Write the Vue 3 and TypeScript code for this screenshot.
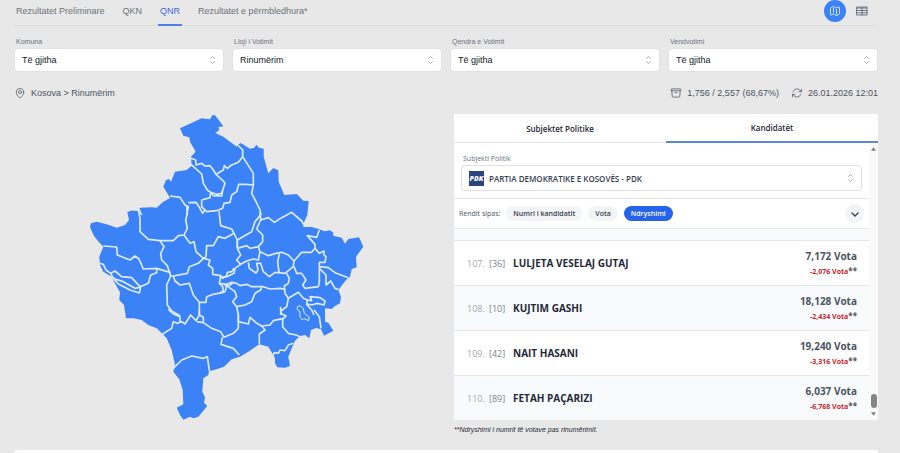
<script setup lang="ts">
import { ref } from 'vue'

interface Filter {
  id: string
  label: string
  value: string
}

interface Candidate {
  rank: number
  code: number
  name: string
  votes: string
  change: string
}

const tabs = ['Rezultatet Preliminare', 'QKN', 'QNR', 'Rezultatet e përmbledhura*']
const activeTab = ref('QNR')

const filters: Filter[] = [
  { id: 'komuna', label: 'Komuna', value: 'Të gjitha' },
  { id: 'lloji', label: 'Lloji i Votimit', value: 'Rinumërim' },
  { id: 'qendra', label: 'Qendra e Votimit', value: 'Të gjitha' },
  { id: 'vendvotimi', label: 'Vendvotimi', value: 'Të gjitha' },
]

const sorts = ['Numri i kandidatit', 'Vota', 'Ndryshimi']
const activeSort = ref('Ndryshimi')

const candidates: Candidate[] = [
  { rank: 107, code: 36, name: 'LULJETA VESELAJ GUTAJ', votes: '7,172', change: '-2,076' },
  { rank: 108, code: 10, name: 'KUJTIM GASHI', votes: '18,128', change: '-2,434' },
  { rank: 109, code: 42, name: 'NAIT HASANI', votes: '19,240', change: '-3,316' },
  { rank: 110, code: 89, name: 'FETAH PAÇARIZI', votes: '6,037', change: '-6,768' },
]
</script>

<template>
  <main class="page">
    <header class="topbar">
      <nav class="tabs">
        <a
          v-for="tab in tabs"
          :key="tab"
          href="#"
          class="tab"
          :class="{ active: tab === activeTab }"
          @click.prevent="activeTab = tab"
        >{{ tab }}</a>
      </nav>
      <div class="views">
        <button type="button" class="view on" aria-label="Harta">
          <svg viewBox="0 0 24 24" class="line"><path d="M9 6.75V15m6-6v8.25m.5 3.5 4.9-2.45c.38-.19.6-.58.6-1V4.8c0-.84-.88-1.38-1.63-1l-3.87 1.93c-.32.16-.69.16-1 0L9.5 3.25a1.1 1.1 0 0 0-1 0L3.6 5.7c-.38.19-.6.58-.6 1v12.5c0 .84.88 1.38 1.63 1l3.87-1.93c.32-.16.69-.16 1 0l5 2.5c.32.16.69.16 1 0Z" /></svg>
        </button>
        <button type="button" class="view" aria-label="Tabela">
          <svg viewBox="0 0 24 24" class="line"><path d="M2 4h20v16H2zM2 6h20M2 11h20M2 15.500h20M12 6v14" /></svg>
        </button>
      </div>
    </header>

    <form class="filters">
      <div v-for="f in filters" :key="f.id" class="field">
        <label :for="f.id">{{ f.label }}</label>
        <div class="select-box">
          <select :id="f.id"><option>{{ f.value }}</option></select>
          <svg viewBox="0 0 10 14" class="arrows"><path d="M2 5l3-3 3 3M2 9l3 3 3-3" /></svg>
        </div>
      </div>
    </form>

    <div class="status">
      <div class="crumb">
        <svg viewBox="0 0 24 24" class="line"><path d="M15 10.5a3 3 0 1 1-6 0 3 3 0 0 1 6 0Z" /><path d="M19.5 10.5c0 7.14-7.5 11.25-7.5 11.25S4.500 17.640 4.500 10.500a7.500 7.500 0 1 1 15 0Z" /></svg>
        <span>Kosova &gt; Rinumërim</span>
      </div>
      <div class="stats">
        <div class="stat">
          <svg viewBox="0 0 24 24" class="line"><path d="M20.250 7.500l-.6 10.600a2.250 2.250 0 0 1-2.250 2.150H6.600a2.250 2.250 0 0 1-2.250-2.150L3.750 7.500M10 11.250h4M3.400 7.500h17.200c.6 0 1.100-.5 1.100-1.100V4.900c0-.6-.5-1.100-1.100-1.100H3.400c-.6 0-1.100.5-1.100 1.100v1.500c0 .6.5 1.100 1.100 1.100Z" /></svg>
          <span>1,756 / 2,557 (68,67%)</span>
        </div>
        <div class="stat">
          <svg viewBox="0 0 24 24" class="line"><path d="M16 9.350h5V4.360M2.990 19.640v-5h5M3 14.650l3.200 3.200a8.250 8.250 0 0 0 13.800-3.700M4.030 9.860a8.250 8.250 0 0 1 13.800-3.700L21 9.350" /></svg>
          <span>26.01.2026 12:01</span>
        </div>
      </div>
    </div>

    <div class="content">
      <section class="map-area">
        <svg class="map" viewBox="87 114 278 308" role="img" aria-label="Kosova">
          <path
            class="land"
            d="M180 128.300L201.700 118.300L210 119.300L212.300 115.300L215 115.300L219.300 120.700L223.300 126.300L218.300 127.300L219.300 130L215.300 133L223.300 136.700L236.700 146.700L237.700 145L240.700 143L250 148.700L254.300 147.700L256.300 144.700L259 147.700L263.700 148.700L263.700 156.700L268.300 173.300L273.300 168L278.300 170.300L278.700 181.700L284.300 195L296.700 194L303.300 200.700L308.700 201L307.300 215L304 222.300L303.300 227L311.700 227L318.300 229L325 231.300L330 230.300L333.300 232.700L333.300 235.700L341.700 237.700L345 243.700L348.300 239L359 237.300L363.300 246.700L356 256.700L356.700 267.300L351.700 269L350 276.700L346 280L338.300 290L341 296.700L340 303.300L335 306L331.700 309L325 308.300L325 321.700L328.300 322.700L333.300 330.700L324 335.700L321 329.300L316 328L311 330L309.300 338.300L305 335L300 336L295 340.700L291.700 348.300L288.300 356.700L290 366L285 367.700L277.300 367.300L275 363.300L275 358L273.300 355L268.300 346.700L259.300 344.300L248.300 351.700L240 356.700L231.700 359.300L224 366.700L213.300 370.300L209 370.700L208.300 375L203.300 378.300L202.300 391.700L205 397.300L204 402.700L207.300 406L198.300 416.700L193.300 418.300L190 416.700L183.300 419.700L180 415L176.700 407.700L183.300 404.300L182.700 390L179.300 379.300L173.300 371.700L175 365L171.700 350L166.700 338.300L162.700 334L156.700 328.300L148.300 325L141.700 320L133.300 318.300L126 318.300L124 305L119.300 300L120 292.300L115 283.300L111.700 276.700L103.300 271.700L100 265L99.300 256.700L103.300 246.700L98 241L94 236L91 229.500L90 226.500L91 223.300L96.700 221.700L106.700 224.300L116.700 227.700L125 225L129 220L127.300 212.300L131 210.500L138.300 211L140 207.700L151.700 207.300L156.700 207.700L163 202L170 198L168.300 195L163.300 186.700L166 180L169 179L171 181.700L175 171.700L186.700 170L191.700 165.700L191 156.700L195.700 151.700L190 141.700L189.300 137.300L183.300 135.700Z"
          />
          <g class="borders" transform="translate(90 105) scale(0.33333)">
            <path d="M303 160L317 165L318 180L335 175L345 183L360 182L370 195L378 208L400 195L403 182L412 190L425 180L445 172L458 155" />
            <path d="M303 178L335 207L340 235L352 255L362 262L380 268L395 265L405 235L400 228L378 208" />
            <path d="M362 262L370 272L395 273L398 258M362 262L360 278L335 285L335 305L350 320L380 317L398 310L402 295L420 292L425 270L440 260L446 238L470 238L490 240" />
            <path d="M240 273L270 277L285 300L295 305L290 330M295 293L318 292L330 310L338 325L345 313M145 310L155 330" />
          </g>
          <g class="borders" transform="translate(220 105) scale(0.33333)">
            <path d="M53 120L68 135L68 155M68 155L100 205L100 240L95 265L108 290L120 315L122 330" />
          </g>
          <g class="borders" transform="translate(90 205) scale(0.33333)">
            <path d="M145 15L150 40L150 80L175 103L210 107L250 107L265 92L282 90L292 70L287 45L292 25L290 0" />
            <path d="M387 19L392 62L425 72L432 85L442 105L442 130" />
            <path d="M432 85L405 100L385 95L370 122L350 122L348 155L340 160L318 140L312 110L300 115L282 90" />
            <path d="M210 107L222 125L212 145L215 165L232 182L242 213M340 160L325 175L298 185L292 205L250 213L242 213" />
            <path d="M40 123L80 126L82 150L120 165L135 153L147 162L160 192L200 190L242 203" />
            <path d="M30 175L40 178L48 195L62 205L75 198L95 215L125 218L150 245L175 235L182 210L200 203L200 190" />
            <path d="M62 205L68 217L85 237L120 255L148 264L152 246L135 250L100 230L75 222L68 217" />
            <path d="M242 213L230 240L232 300L245 318L270 332" />
            <path d="M250 213L255 228L270 240L298 235L310 270L328 292L328 330" />
            <path d="M328 292L348 292L350 275L370 268L400 262L398 245L388 235L392 212L368 208L368 190L355 180L360 165L340 160" />
            <path d="M392 212L398 220L410 212L412 202L425 200L432 190M400 235L410 243L420 240L430 232" />
          </g>
          <g class="borders" transform="translate(220 205) scale(0.33333)">
            <path d="M122 22L118 35L105 50L95 80L52 105L52 130" />
            <path d="M122 25L122 45L145 38L163 52L185 38L215 22L245 48L252 60" />
            <path d="M122 45L110 72L128 90L128 110L115 125L120 140L145 152L168 145L185 142L205 150L222 168L245 142L275 142L285 130L285 118L262 92L290 97L298 75" />
            <path d="M52 130L80 122L90 130L115 125M52 130L62 150L50 165L62 178L80 168L100 162L115 165L120 140" />
            <path d="M85 172L88 190L108 204L114 195L110 175L122 175L130 200L148 215L165 202L195 205L220 185L222 168M178 147L173 170L177 203" />
            <path d="M62 178L45 190L42 205L20 215L0 218" />
            <path d="M222 185L230 205L245 205L258 225L248 240L255 250L295 245L298 230L298 172L315 172L318 155L312 150L312 138L298 145L285 130" />
            <path d="M298 185L325 188L345 203L385 218M298 190L318 210L318 240L332 228L345 250L355 253" />
            <path d="M200 205L208 220L205 235L193 243L195 265L205 280L235 262L250 280L262 285L260 298L275 315L282 330" />
            <path d="M262 285L275 287L270 275L300 278L315 288L312 300L292 295L275 300L262 297" />
            <path d="M0 235L20 238L35 232L50 235L60 242L80 238L95 245L130 245L150 252L180 250L195 253" />
            <path d="M20 242L45 260L50 275L38 290L50 305L75 300L95 290L105 265L122 255L125 245M50 305L55 330M205 280L200 305L183 318L182 330" />
            <path d="M20 242L15 260L0 262" />
            <path class="thin" d="M232 305L240 302L250 310L252 323L268 338L265 347L252 340L247 345L240 335L240 320L232 315Z" />
          </g>
          <g class="borders" transform="translate(90 310) scale(0.33333)">
            <path d="M218 72L245 55L250 35L262 40L275 35L285 42L302 15L318 32L328 15L328 0M235 -2L250 12L270 20L270 35" />
            <path d="M328 15L340 22L340 38L320 35M340 38L365 55L392 65L402 82L430 70L445 55L445 18M397 82L393 103L430 115L448 135" />
            <path d="M250 175L275 150L305 138L340 145L352 140L358 182" />
          </g>
          <g class="borders" transform="translate(220 310) scale(0.33333)">
            <path d="M55 10L55 35L85 42L90 22L108 38L125 48L150 45L160 32L190 25L198 18L182 10L182 -10" />
            <path d="M125 48L135 60L118 72L118 103M188 25L188 50L205 70L228 75L240 80" />
            <path d="M160 135L163 128L175 130L180 120L195 122L205 105L220 100M282 0L298 20L303 55" />
          </g>
        </svg>
      </section>

      <section class="results">
        <div class="panel">
          <div class="panel-tabs">
            <button type="button" class="panel-tab">Subjektet Politike</button>
            <button type="button" class="panel-tab current">Kandidatët</button>
          </div>
          <div class="panel-body">
            <div class="scroll-content">
              <div class="party">
                <label for="subjekti">Subjekti Politik</label>
                <div class="select-box party-box">
                  <span class="party-logo">PDK</span>
                  <select id="subjekti"><option>PARTIA DEMOKRATIKE E KOSOVËS - PDK</option></select>
                  <svg viewBox="0 0 10 14" class="arrows"><path d="M2 5l3-3 3 3M2 9l3 3 3-3" /></svg>
                </div>
              </div>
              <div class="sorting">
                <span>Rendit sipas:</span>
                <button
                  v-for="s in sorts"
                  :key="s"
                  type="button"
                  class="pill"
                  :class="{ chosen: s === activeSort }"
                  @click="activeSort = s"
                >{{ s }}</button>
                <button type="button" class="direction" aria-label="Renditja">
                  <svg viewBox="0 0 12 12"><path d="M2.500 4.500L6 8l3.500-3.500" /></svg>
                </button>
              </div>
              <ul class="list">
                <li class="previous"></li>
                <li v-for="c in candidates" :key="c.rank" class="row">
                  <span class="rank">{{ c.rank }}.</span>
                  <span class="code">[{{ c.code }}]</span>
                  <span class="name">{{ c.name }}</span>
                  <span class="votes">
                    <strong>{{ c.votes }} Vota</strong>
                    <small><em>{{ c.change }} Vota</em>**</small>
                  </span>
                </li>
              </ul>
            </div>
            <div class="scrollbar" aria-hidden="true">
              <svg viewBox="0 0 6 4"><path d="M3 0l3 4H0z" /></svg>
              <span class="thumb"></span>
              <svg viewBox="0 0 6 4"><path d="M3 4l3-4H0z" /></svg>
            </div>
          </div>
        </div>
        <p class="note">**Ndryshimi i numrit të votave pas rinumërimit.</p>
      </section>
    </div>

    <section class="next-card"></section>
  </main>
</template>

<style>
body {
  background: #e8e8e8;
}
</style>

<style scoped>
* {
  box-sizing: border-box;
}

.page {
  display: flex;
  flex-direction: column;
  min-height: 100vh;
  padding: 0 22px 0 14px;
  font-family: "Liberation Sans", Arial, sans-serif;
  font-size: 9px;
  color: #4b5563;
}

button,
select {
  font: inherit;
  border: 0;
  margin: 0;
}

.line {
  width: 12px;
  height: 12px;
  fill: none;
  stroke: currentColor;
  stroke-width: 1.5;
  stroke-linecap: round;
  stroke-linejoin: round;
}

.topbar {
  display: flex;
  justify-content: space-between;
  height: 26px;
  border-bottom: 1px solid #dcdddf;
}

.tabs {
  display: flex;
  gap: 14px;
}

.tab {
  height: 26px;
  padding: 0 2px;
  line-height: 23px;
  color: #6b7280;
  text-decoration: none;
  border-bottom: 2px solid transparent;
}

.tab.active {
  color: #3b68d8;
  border-color: #4f7fe8;
}

.views {
  display: flex;
  gap: 5px;
  padding-right: 5px;
}

.view {
  display: grid;
  place-items: center;
  width: 22px;
  height: 22px;
  padding: 0;
  border-radius: 50%;
  background: #e5e7eb;
  color: #4b5563;
}

.view.on {
  background: #3b82f6;
  color: #fff;
}

.filters {
  display: grid;
  grid-template-columns: repeat(4, 1fr);
  gap: 8px;
  padding-top: 11px;
}

.field label,
.party label {
  display: block;
  padding-left: 2px;
  font-size: 7px;
  line-height: 10px;
  color: #6b7280;
}

.select-box {
  position: relative;
  display: flex;
  align-items: center;
  height: 24px;
  margin-top: 1px;
  background: #fff;
  border: 1px solid #dfe1e4;
  border-radius: 4px;
}

.select-box select {
  flex: 1;
  min-width: 0;
  height: 100%;
  padding: 0 20px 0 7px;
  background: transparent;
  color: #111827;
  appearance: none;
}

.arrows {
  position: absolute;
  right: 7px;
  width: 7px;
  height: 10px;
  fill: none;
  stroke: #9ca3af;
  stroke-width: 1.2;
  pointer-events: none;
}

.status {
  display: flex;
  justify-content: space-between;
  height: 42px;
  padding-bottom: 1px;
}

.crumb,
.stats,
.stat {
  display: flex;
  align-items: center;
}

.crumb,
.stat {
  gap: 5px;
}

.stats {
  gap: 12px;
}

.content {
  display: grid;
  grid-template-columns: 1fr 1fr;
  gap: 16px;
}

.map-area {
  display: flex;
  justify-content: center;
  align-items: flex-start;
}

.map {
  width: 278px;
  max-width: 100%;
}

.land {
  fill: #3b82f6;
}

.borders {
  fill: none;
  stroke: #dbeafe;
  stroke-width: 5;
  stroke-linejoin: round;
}

.thin {
  stroke-width: 3;
}

.results {
  font-family: "Open Sans", "Noto Sans", sans-serif;
}

.panel {
  background: #fff;
}

.panel-tabs {
  display: grid;
  grid-template-columns: 1fr 1fr;
}

.panel-tab {
  height: 29px;
  padding: 0;
  background: none;
  font-size: 8px;
  font-weight: 600;
  color: #1f2937;
  border-bottom: 1px solid #e5e7eb;
}

.panel-tab.current {
  border-bottom: 2px solid #5b86dc;
}

.panel-body {
  display: flex;
}

.scroll-content {
  flex: 1;
  min-width: 0;
}

.party {
  padding: 11px 7px 7px;
  border-bottom: 1px solid #e5e7eb;
}

.party-box {
  height: 26px;
  padding-left: 7px;
}

.party-box select {
  font-size: 8px;
  font-weight: 600;
  color: #374151;
  padding-left: 5px;
}

.party-logo {
  width: 15px;
  height: 15px;
  background: #2b4580;
  color: #fff;
  font-size: 7px;
  font-style: italic;
  font-weight: 800;
  line-height: 15px;
  text-align: center;
}

.sorting {
  display: flex;
  align-items: center;
  gap: 6px;
  height: 29px;
  padding: 0 5px;
  font-size: 7px;
}

.pill {
  height: 15px;
  padding: 0 7px;
  border-radius: 8px;
  background: #f3f4f6;
  color: #374151;
  font-weight: 600;
}

.pill.chosen {
  background: #2563eb;
  color: #fff;
}

.direction {
  display: grid;
  place-items: center;
  width: 19px;
  height: 19px;
  margin-left: auto;
  padding: 0;
  border-radius: 50%;
  background: #f3f4f6;
}

.direction svg {
  width: 12px;
  height: 12px;
  fill: none;
  stroke: #374151;
  stroke-width: 1.3;
}

.list {
  margin: 0;
  padding: 0;
  list-style: none;
  border-top: 1px solid #e5e7eb;
}

.previous {
  height: 11px;
  background: #f8fafc;
}

.row {
  display: flex;
  align-items: center;
  height: 45px;
  padding: 0 12px 0 13px;
  border-top: 1px solid #e5e7eb;
}

.row:nth-child(odd) {
  background: #f8fafc;
}

.rank {
  width: 22px;
  color: #a3a8b0;
}

.code {
  width: 24px;
  color: #7b828d;
}

.name {
  flex: 1;
  font-size: 10px;
  font-weight: 700;
  color: #1f2937;
}

.votes {
  display: grid;
  text-align: right;
}

.votes strong {
  font-size: 10px;
  line-height: 16px;
  color: #4b5563;
}

.votes small {
  font-size: 8px;
  font-weight: 700;
  line-height: 13px;
}

.votes em {
  font-size: 7px;
  font-style: normal;
  color: #c9252d;
}

.scrollbar {
  display: flex;
  flex-direction: column;
  align-items: center;
  width: 9px;
  padding: 4px 0;
  background: #fafafa;
}

.scrollbar svg {
  width: 5px;
  height: 4px;
  fill: #7d7d7d;
}

.thumb {
  width: 6px;
  height: 14px;
  margin: auto 0 4px;
  border-radius: 3px;
  background: #858585;
}

.note {
  margin: 0;
  padding-top: 4px;
  font-family: "Liberation Sans", Arial, sans-serif;
  font-size: 7px;
  font-style: italic;
  line-height: 12px;
  color: #1f2937;
}

.next-card {
  flex: 1;
  margin-top: 14px;
  border-radius: 4px 4px 0 0;
  background: #fff;
}
</style>
